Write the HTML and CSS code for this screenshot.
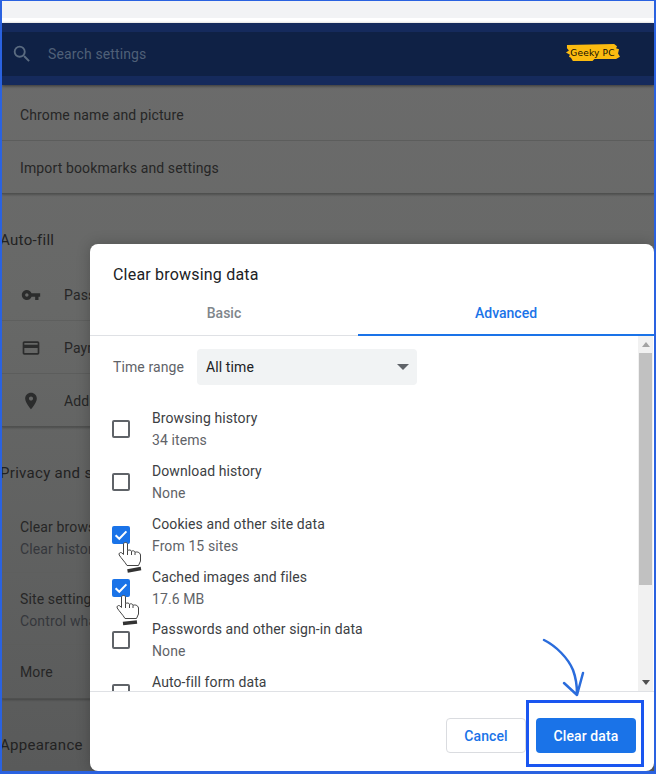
FILE: index.html
```html
<!DOCTYPE html>
<html lang="en">
<head>
<meta charset="utf-8">
<title>Clear browsing data</title>
<link rel="stylesheet" href="styles.css">
</head>
<body>
<div class="frame">
  <div class="topbar"></div>
  <header class="header">
    <div class="searchband">
      <svg class="search-icon" viewBox="0 0 24 24"><path d="M15.5 14h-.79l-.28-.27A6.47 6.47 0 0 0 16 9.5 6.5 6.5 0 1 0 9.5 16c1.61 0 3.09-.59 4.23-1.57l.27.28v.79l5 4.99L20.49 19l-4.99-5zm-6 0C7.01 14 5 11.99 5 9.5S7.01 5 9.5 5 14 7.01 14 9.500 11.99 14 9.500 14z"/></svg>
      <span class="search-text">Search settings</span>
      <div class="logo">
        <svg class="logo-bg" viewBox="0 0 56 16" preserveAspectRatio="none"><path d="M2 1 L50 0 L53 2 L52 4 L55 5 L54 9 L56 12 L52 14 L30 14 L28 16 L8 16 L6 13 L4 12 L5 10 L1 8 L4 6 L2 4 Z"/></svg>
        <span class="logo-text">Geeky PC</span>
      </div>
    </div>
  </header>
  <main class="page">
    <section class="card card-first">
      <div class="row">Chrome name and picture</div>
      <div class="row row-last">Import bookmarks and settings</div>
    </section>
    <h2 class="heading heading-autofill">Auto-fill</h2>
    <section class="card">
      <div class="row row-icon">
        <svg class="row-svg" viewBox="0 0 24 24"><path d="M12.65 10C11.83 7.67 9.61 6 7 6c-3.31 0-6 2.69-6 6s2.69 6 6 6c2.61 0 4.83-1.67 5.65-4H17v4h4v-4h2v-4H12.65zM7 14c-1.1 0-2-.9-2-2s.9-2 2-2 2 .9 2 2-.9 2-2 2z"/></svg>
        <span>Pass</span>
      </div>
      <div class="row row-icon">
        <svg class="row-svg" viewBox="0 0 24 24"><path d="M20 4H4c-1.11 0-1.99.89-1.99 2L2 18c0 1.11.89 2 2 2h16c1.11 0 2-.89 2-2V6c0-1.11-.89-2-2-2zm0 14H4v-6h16v6zm0-10H4V6h16v2z"/></svg>
        <span>Paym</span>
      </div>
      <div class="row row-icon row-last">
        <svg class="row-svg" viewBox="0 0 24 24"><path d="M12 2C8.13 2 5 5.13 5 9c0 5.25 7 13 7 13s7-7.75 7-13c0-3.87-3.13-7-7-7zm0 9.500c-1.38 0-2.500-1.12-2.500-2.500s1.12-2.500 2.500-2.500 2.500 1.12 2.500 2.500-1.12 2.500-2.500 2.500z"/></svg>
        <span>Addr</span>
      </div>
    </section>
    <h2 class="heading heading-privacy">Privacy and se</h2>
    <section class="card">
      <div class="row row-two"><span>Clear brows</span><span>Clear history</span></div>
      <div class="row row-two row-site"><span>Site settings</span><span>Control wha</span></div>
      <div class="row row-more row-last">More</div>
    </section>
    <h2 class="heading heading-appearance">Appearance</h2>
  </main>

  <div class="dialog">
    <div class="dialog-title">Clear browsing data</div>
    <div class="tabs">
      <div class="tab">Basic</div>
      <div class="tab tab-active">Advanced</div>
    </div>
    <div class="dialog-body">
      <div class="scroll-content">
        <div class="range">
          <span class="range-label">Time range</span>
          <div class="select"><span>All time</span><i class="caret"></i></div>
        </div>
        <div class="item"><i class="box"></i><div class="item-text"><span class="item-name">Browsing history</span><span class="item-sub">34 items</span></div></div>
        <div class="item"><i class="box"></i><div class="item-text"><span class="item-name">Download history</span><span class="item-sub">None</span></div></div>
        <div class="item"><i class="box box-on"><svg viewBox="0 0 18 18"><path d="M3.6 9.2 7.3 12.8 14.4 5.4"/></svg></i><div class="item-text"><span class="item-name">Cookies and other site data</span><span class="item-sub">From 15 sites</span></div></div>
        <div class="item"><i class="box box-on"><svg viewBox="0 0 18 18"><path d="M3.6 9.2 7.3 12.8 14.4 5.4"/></svg></i><div class="item-text"><span class="item-name">Cached images and files</span><span class="item-sub">17.6 MB</span></div></div>
        <div class="item"><i class="box"></i><div class="item-text"><span class="item-name">Passwords and other sign-in data</span><span class="item-sub">None</span></div></div>
        <div class="item item-cut"><i class="box"></i><div class="item-text"><span class="item-name">Auto-fill form data</span></div></div>
      </div>
      <div class="scrollbar">
        <i class="arrow-up"></i>
        <div class="track"><div class="thumb"></div></div>
        <i class="arrow-down"></i>
      </div>
    </div>
    <div class="dialog-footer">
      <button class="btn btn-cancel">Cancel</button>
      <button class="btn btn-primary">Clear data</button>
    </div>
  </div>

  <svg class="hand hand-one" viewBox="0 0 24 32"><path class="hand-line" d="M5.500 3c0-2 4-2 4 0v6.500c2-1 3.500-.5 4 .8 1.500-1 3-.5 3.500 1 1.500-.8 5-.3 5.500 2.700v6l-2 4.500H9C7 21 3 17 1.200 14c-.8-1.500 1-3.200 2.500-2.200l1.800 1.700zM9.500 9.500V14M13.500 10.300V14M17 11.300V14"/><path class="hand-bar" d="M9.500 30 23 27.500"/></svg>
  <svg class="hand hand-two" viewBox="0 0 24 32"><path class="hand-line" d="M5.500 3c0-2 4-2 4 0v6.500c2-1 3.500-.5 4 .8 1.500-1 3-.5 3.500 1 1.500-.8 5-.3 5.500 2.700v6l-2 4.500H9C7 21 3 17 1.200 14c-.8-1.500 1-3.200 2.500-2.200l1.800 1.700zM9.500 9.500V14M13.500 10.300V14M17 11.300V14"/><path class="hand-bar" d="M7 29.500 21 28"/></svg>
  <div class="highlight"></div>
  <svg class="curve" viewBox="0 0 44 64"><path d="M2 2C14 8 26 20 31 32 34 40 35 48 35 56M22 45 35 57 41 35"/></svg>
</div>
</body>
</html>
```
FILE: styles.css
```css
* { box-sizing: border-box; }
html, body { margin: 0; padding: 0; }
body { font-family: Roboto, "Liberation Sans", sans-serif; background: #fff; }

.frame {
  position: relative;
  width: 656px;
  height: 774px;
  overflow: hidden;
  border-style: solid;
  border-color: #2a62e0;
  border-width: 1px 2px 3px 2px;
  background: linear-gradient(#6c6c6c, #676867 40%, #595a5a);
  display: flex;
  flex-direction: column;
}

.topbar {
  height: 22px;
  flex: none;
  background: #f2f3f5;
  border-bottom: 5px solid #fff;
}

.header {
  height: 62px;
  flex: none;
  padding: 9px 0;
  background: #152a5c;
  box-shadow: 0 1px 3px rgba(0, 0, 0, .5);
  position: relative;
}
.searchband {
  height: 44px;
  background: #0f2145;
  display: flex;
  align-items: center;
  padding-left: 9px;
  position: relative;
}
.search-icon { width: 22px; height: 22px; fill: #5a6b80; flex: none; }
.search-text { margin-left: 15px; font-size: 14px; letter-spacing: .13px; color: #4f6078; }
.logo {
  position: absolute;
  left: 563px;
  top: 12px;
  width: 55px;
  height: 17px;
  display: flex;
  align-items: center;
  justify-content: center;
}
.logo-bg { position: absolute; inset: 0; width: 100%; height: 100%; fill: #fbbb10; }
.logo-text {
  position: relative;
  font-family: "DejaVu Sans", sans-serif;
  font-size: 9px;
  letter-spacing: .2px;
  color: #120e04;
  white-space: nowrap;
}

.page { flex: 1; min-height: 0; }
.row {
  height: 53px;
  display: flex;
  align-items: center;
  padding: 1px 0 0 18px;
  font-size: 14px;
  letter-spacing: .13px;
  color: #262626;
  white-space: nowrap;
  border-bottom: 1px solid #5e5f5e;
}
.row-last { border-bottom: 1px solid #4f504f; box-shadow: 0 1px 2px rgba(0, 0, 0, .25); }
.card-first .row:first-child { height: 56px; padding-top: 4px; }
.row-icon { padding-left: 19px; }
.row-svg { width: 20px; height: 20px; fill: #2b2c2c; margin-right: 23px; flex: none; }
.row-two {
  height: 71px;
  flex-direction: column;
  align-items: flex-start;
  justify-content: center;
  line-height: 22px;
}
.row-two span:last-child { color: #35373c; }
.row-site { height: 72px; padding-top: 2px; }
.row-more { height: 54px; padding-top: 0; }

.heading {
  margin: 0 0 0 -2px;
  padding-top: 35px;
  font-size: 15px;
  letter-spacing: .3px;
  line-height: 22px;
  font-weight: 400;
  color: #222;
  white-space: nowrap;
}
.heading-autofill { height: 74px; }
.heading-privacy { height: 75px; }
.heading-appearance { height: 72px; }

.dialog {
  position: absolute;
  left: 88px;
  top: 243px;
  width: 564px;
  height: 527px;
  background: #fff;
  border-radius: 8px;
  box-shadow: 0 0 14px rgba(0, 0, 0, .22);
  display: flex;
  flex-direction: column;
  overflow: hidden;
}
.dialog-title {
  flex: none;
  height: 61px;
  padding: 20px 0 0 23px;
  font-size: 16px;
  letter-spacing: .2px;
  line-height: 21px;
  color: #202124;
}
.tabs {
  flex: none;
  height: 31px;
  display: flex;
  border-bottom: 1px solid #dfe1e5;
}
.tab {
  width: 268px;
  text-align: center;
  font-size: 14px;
  font-weight: 500;
  line-height: 17px;
  color: #80868b;
}
.tab-active {
  flex: 1;
  width: auto;
  color: #1a73e8;
  border-bottom: 2px solid #1a73e8;
  height: 31px;
}

.dialog-body { flex: 1; min-height: 0; display: flex; }
.scroll-content { flex: 1; min-width: 0; overflow: hidden; padding-left: 23px; }
.range { display: flex; align-items: center; padding-top: 13px; height: 49px; margin-bottom: 18px; }
.range-label { width: 84px; font-size: 14px; letter-spacing: .1px; color: #5f6368; flex: none; }
.select {
  width: 220px;
  height: 36px;
  background: #f1f3f4;
  border-radius: 4px;
  display: flex;
  align-items: center;
  justify-content: space-between;
  padding: 0 8px 0 9px;
  font-size: 14px;
  letter-spacing: .1px;
  color: #202124;
}
.caret {
  width: 0;
  height: 0;
  border-left: 6px solid transparent;
  border-right: 6px solid transparent;
  border-top: 6px solid #5f6368;
}
.item { height: 52.750px; display: flex; align-items: center; }
.item-cut { height: 22px; align-items: flex-start; margin-top: 4px; }
.item-cut .box { margin-top: 13px; }
.box {
  flex: none;
  width: 18px;
  height: 18px;
  border: 2px solid #5f6368;
  border-radius: 2px;
  margin: 0 22px 0 -1px;
}
.box-on { border: 0; background: #1a73e8; }
.box-on svg { display: block; width: 18px; height: 18px; fill: none; stroke: #fff; stroke-width: 2; }
.item-text { display: flex; flex-direction: column; }
.item-name { font-size: 14px; letter-spacing: .1px; line-height: 22px; color: #3c4043; }
.item-sub { font-size: 14px; letter-spacing: .1px; line-height: 22px; color: #5f6368; }

.scrollbar {
  flex: none;
  width: 15px;
  margin-right: 1px;
  background: #f1f1f1;
  display: flex;
  flex-direction: column;
  align-items: center;
}
.arrow-up, .arrow-down {
  flex: none;
  width: 0;
  height: 0;
  margin: 6px 0;
  border-left: 4px solid transparent;
  border-right: 4px solid transparent;
}
.arrow-up { border-bottom: 5px solid #a3a3a3; }
.arrow-down { border-top: 5px solid #505050; }
.track { flex: 1; width: 100%; padding: 0 1px; }
.thumb { height: 232px; background: #c1c1c1; }

.dialog-footer {
  flex: none;
  height: 80px;
  border-top: 1px solid #dfe1e5;
  display: flex;
  justify-content: flex-end;
  align-items: flex-start;
  gap: 10px;
  padding: 26px 18px 0 0;
}
.btn {
  height: 35px;
  border-radius: 4px;
  font-family: inherit;
  font-size: 14px;
  letter-spacing: .1px;
  font-weight: 500;
  padding: 0;
}
.btn-cancel { width: 80px; background: #fff; color: #1a73e8; border: 1px solid #dadce0; }
.btn-primary { width: 100px; background: #1a73e8; color: #fff; border: 0; }

.hand { position: absolute; width: 24px; height: 32px; }
.hand-one { left: 116px; top: 540px; }
.hand-two { left: 114px; top: 593px; }
.hand-line { fill: #fff; stroke: #444; stroke-width: 1; }
.hand-bar { fill: none; stroke: #333; stroke-width: 3.500; }

.highlight {
  position: absolute;
  left: 524px;
  top: 699px;
  width: 118px;
  height: 67px;
  border: 3px solid #1a56f0;
}
.curve {
  position: absolute;
  left: 540px;
  top: 637px;
  width: 44px;
  height: 64px;
  fill: none;
  stroke: #2a6cdc;
  stroke-width: 2.500;
  stroke-linecap: round;
  stroke-linejoin: round;
}
```
